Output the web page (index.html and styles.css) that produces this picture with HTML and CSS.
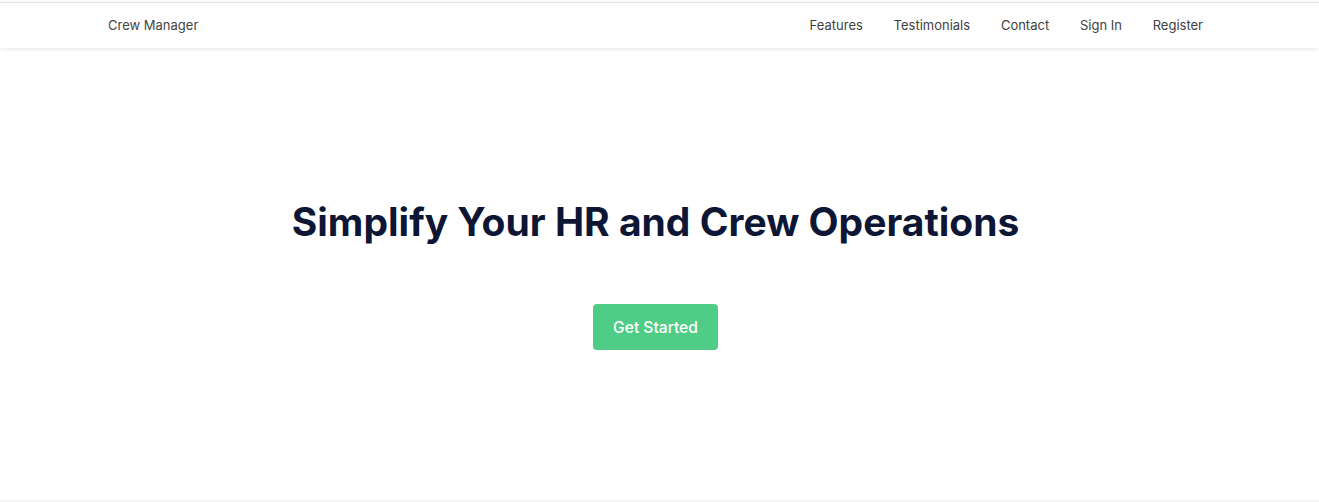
FILE: index.html
```html
<!DOCTYPE html>
<html lang="en">
<head>
<meta charset="utf-8">
<title>Crew Manager</title>
<link rel="stylesheet" href="styles.css">
</head>
<body>
<header class="site-header">
  <div class="container header-inner">
    <a class="brand" href="#">Crew Manager</a>
    <nav class="nav">
      <a href="#">Features</a>
      <a href="#">Testimonials</a>
      <a href="#">Contact</a>
      <a href="#">Sign In</a>
      <a href="#">Register</a>
    </nav>
  </div>
</header>
<main class="hero">
  <div class="hero-inner">
    <h1 class="hero-title">Simplify Your HR and Crew Operations</h1>
    <a class="btn-primary" href="#">Get Started</a>
  </div>
</main>
<footer class="site-footer"></footer>
</body>
</html>
```
FILE: styles.css
```css
* { box-sizing: border-box; }
html, body { margin: 0; padding: 0; background: #fff; }
body {
  font-family: Inter, "Noto Sans", "Liberation Sans", sans-serif;
  padding-top: 2px;
}
a { text-decoration: none; }
.site-header {
  border-top: 1px solid #e3e3e3;
  background: #fff;
  box-shadow: 0 1px 4px rgba(0,0,0,0.10);
  position: relative;
  z-index: 1;
}
.container {
  width: 1095px;
  margin: 0 auto;
}
.header-inner {
  margin-left: calc((100% - 8px - 1095px) / 2);
  height: 45px;
  padding-bottom: 1px;
  display: flex;
  align-items: center;
  justify-content: space-between;
}
.brand { font-size: 13px; color: #454545; }
.nav { display: flex; gap: 30.75px; }
.nav a { font-size: 13px; color: #3f3f3f; }
.hero {
  padding: 152px 8px 150px 0;
  display: flex;
  justify-content: center;
}
.hero-inner {
  display: flex;
  flex-direction: column;
  align-items: center;
}
.hero-title {
  margin: 0;
  font-size: 39px;
  line-height: 44px;
  font-weight: 700;
  color: #0d1634;
}
.btn-primary {
  margin-top: 60px;
  height: 46px;
  width: 125px;
  display: flex;
  align-items: center;
  justify-content: center;
  background: #4fcd87;
  color: #fff;
  border-radius: 4px;
  font-size: 15.6px;
  font-weight: 500;
}
.site-footer {
  height: 2px;
  background: #f5f5f5;
}
```
